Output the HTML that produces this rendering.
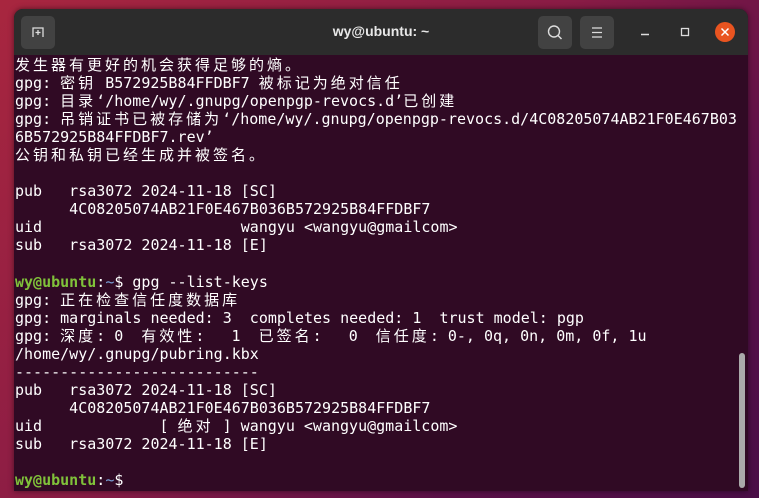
<!DOCTYPE html>
<html><head><meta charset="utf-8"><style>
html,body{margin:0;padding:0;width:759px;height:498px;overflow:hidden;}
body{background:linear-gradient(135deg,#a8263f 0%,#8a1c45 45%,#5a1048 75%,#4a0e47 100%);position:relative;}
.win{position:absolute;left:14px;top:9px;width:734px;height:482px;border-radius:9px 9px 0 0;overflow:hidden;background:#300a24;box-shadow:0 0 6px rgba(0,0,0,.5);}
.tb{position:absolute;left:0;top:0;right:0;height:46px;background:#2c2c2c;}
.btn{position:absolute;top:7px;width:34px;height:33px;border-radius:5px;background:#424242;}
.title{position:absolute;left:0;right:0;top:14px;text-align:center;color:#e8e8e8;font:bold 14px "Liberation Sans",sans-serif;}
.term{position:absolute;left:1px;top:47px;font-family:"DejaVu Sans Mono","Liberation Mono",monospace;font-size:15px;line-height:18.05px;color:#ffffff;white-space:pre;}
.c{font-family:"Noto Sans CJK SC",sans-serif;letter-spacing:3px;}
.g{color:#80c23a;font-weight:bold;}
.b{color:#7aa2d8;}
.sb{position:absolute;left:725px;top:344px;width:6px;height:135px;border-radius:3px;background:#aaaaaa;}
</style></head><body>
<div class="win">
 <div class="tb">
  <div class="btn" style="left:7px;"><svg width="34" height="33"><path d="M12 21V12h10v9" stroke="#ddd" stroke-width="1.3" fill="none"/><path d="M17 14v5M14.5 16.5h5" stroke="#ddd" stroke-width="1.3"/></svg></div>
  <div class="title">wy@ubuntu: ~</div>
  <div class="btn" style="left:524px;"><svg width="34" height="33"><circle cx="16" cy="15.5" r="5.5" stroke="#ddd" stroke-width="1.4" fill="none"/><path d="M20 19.5l3.5 3.5" stroke="#ddd" stroke-width="1.5"/></svg></div>
  <div class="btn" style="left:566px;"><svg width="34" height="33"><path d="M12 12h10M12 16.5h10M12 21h10" stroke="#ddd" stroke-width="1.3"/></svg></div>
  <svg style="position:absolute;left:0;top:0" width="734" height="46"><path d="M627 25.5h8" stroke="#ddd" stroke-width="1.4"/><rect x="667.5" y="19.5" width="7" height="7" stroke="#ddd" stroke-width="1.3" fill="none"/><circle cx="711" cy="23" r="10" fill="#e95420"/><path d="M707.5 19.5l7 7M714.5 19.5l-7 7" stroke="#fff" stroke-width="1.5"/></svg>
 </div>
 <div class="term"><span class="c">发生器有更好的机会获得足够的熵。</span>
gpg: <span class="c">密钥</span> B572925B84FFDBF7 <span class="c">被标记为绝对信任</span>
gpg: <span class="c">目录</span>‘/home/wy/.gnupg/openpgp-revocs.d’<span class="c">已创建</span>
gpg: <span class="c">吊销证书已被存储为</span>‘/home/wy/.gnupg/openpgp-revocs.d/4C08205074AB21F0E467B03
6B572925B84FFDBF7.rev’
<span class="c">公钥和私钥已经生成并被签名。</span>

pub   rsa3072 2024-11-18 [SC]
      4C08205074AB21F0E467B036B572925B84FFDBF7
uid                      wangyu &lt;wangyu@gmailcom&gt;
sub   rsa3072 2024-11-18 [E]

<span class="g">wy@ubuntu</span>:<span class="b">~</span>$ gpg --list-keys
gpg: <span class="c">正在检查信任度数据库</span>
gpg: marginals needed: 3  completes needed: 1  trust model: pgp
gpg: <span class="c">深度</span>: 0  <span class="c">有效性</span>:   1  <span class="c">已签名</span>:   0  <span class="c">信任度</span>: 0-, 0q, 0n, 0m, 0f, 1u
/home/wy/.gnupg/pubring.kbx
---------------------------
pub   rsa3072 2024-11-18 [SC]
      4C08205074AB21F0E467B036B572925B84FFDBF7
uid             [ <span class="c">绝对</span> ] wangyu &lt;wangyu@gmailcom&gt;
sub   rsa3072 2024-11-18 [E]

<span class="g">wy@ubuntu</span>:<span class="b">~</span>$</div>
 <div class="sb"></div>
</div>
</body></html>
